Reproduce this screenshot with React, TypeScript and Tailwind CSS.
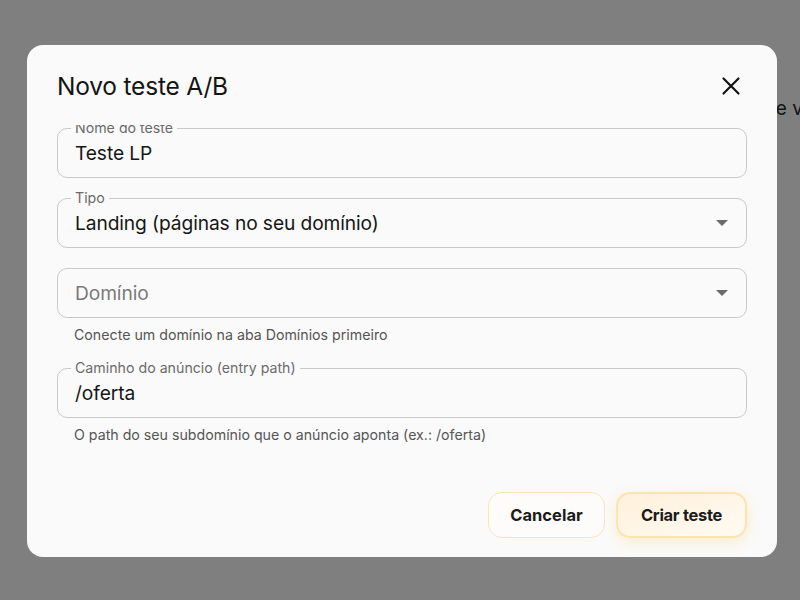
import React from 'react';

const font = { fontFamily: 'Inter, "Noto Sans", sans-serif' };

function Field({
  label,
  value,
  placeholder,
  select,
  hint,
  first,
}: {
  label?: string;
  value?: string;
  placeholder?: string;
  select?: boolean;
  hint?: string;
  first?: boolean;
}) {
  return (
    <div className={first ? 'mt-[3px]' : ''}>
      <div className="relative h-[50px] rounded-[10px] border border-[#c9c9c9] flex items-center pl-[17px] pr-[18px]">
        {label && (
          <span className="absolute left-[13px] -top-[9px] px-[4px] bg-[#fafafa] text-[14.2px] leading-[16px] text-[#6b6b6b]">
            {label}
          </span>
        )}
        <span
          className={`flex-1 text-[19.2px] tracking-[-0.1px] ${
            value ? 'text-[#161616]' : 'text-[#7a7a7a]'
          }`}
        >
          {value ?? placeholder}
        </span>
        {select && (
          <svg width="12" height="6" viewBox="0 0 12 6">
            <path d="M0 0h12L6 6z" fill="#6a6a6a" />
          </svg>
        )}
      </div>
      {hint && (
        <p className="mt-[9px] mb-[5px] pl-[17px] text-[14.2px] leading-[16px] text-[#555]">{hint}</p>
      )}
    </div>
  );
}

export default function App() {
  return (
    <div className="relative w-[800px] h-[600px] overflow-hidden bg-white" style={font}>
      {/* page behind the dialog */}
      <div className="pt-[95px] pl-[769px] whitespace-nowrap text-[19px] text-[#2a2a2a]">
        re variantes
      </div>

      {/* overlay */}
      <div className="absolute inset-0 bg-black/50 flex items-start pt-[45px] pl-[27px]">
        <div className="w-[750px] h-[512px] bg-[#fafafa] rounded-[16px] flex flex-col px-[30px]">
          {/* header */}
          <div className="flex items-start justify-between pt-[26px] h-[80px]">
            <h2 className="text-[24.5px] leading-[30px] text-[#141414] tracking-[-0.2px]">
              Novo teste A/B
            </h2>
            <button className="w-[28px] h-[30px] flex items-center justify-center mr-[2px]">
              <svg width="20" height="20" viewBox="0 0 20 20">
                <path d="M2.5 2.5L17.5 17.5M17.5 2.5L2.5 17.5" stroke="#141414" strokeWidth="2.2" strokeLinecap="round" />
              </svg>
            </button>
          </div>

          {/* form body, scrolled so the first label is clipped */}
          <div className="h-[337px] overflow-hidden flex flex-col gap-[20px]">
            <Field first label="Nome do teste" value="Teste LP" />
            <Field label="Tipo" value="Landing (páginas no seu domínio)" select />
            <Field
              placeholder="Domínio"
              select
              hint="Conecte um domínio na aba Domínios primeiro"
            />
            <Field
              label="Caminho do anúncio (entry path)"
              value="/oferta"
              hint="O path do seu subdomínio que o anúncio aponta (ex.: /oferta)"
            />
          </div>

          {/* footer */}
          <div className="flex justify-end gap-[11px] pt-[30px]">
            <button className="w-[117px] h-[46px] rounded-[14px] border border-[#fbe3bd] bg-[#fdfcfa] text-[16.5px] font-bold text-[#1b1b1b]">
              Cancelar
            </button>
            <button className="w-[131px] h-[46px] rounded-[14px] border-2 border-[#fde2b3] bg-gradient-to-br from-[#fff1db] to-[#fffaf2] text-[16.5px] font-bold text-[#1b1b1b] tracking-[-0.3px] shadow-[0_4px_14px_rgba(251,191,36,0.22)]">
              Criar teste
            </button>
          </div>
        </div>
      </div>
    </div>
  );
}
